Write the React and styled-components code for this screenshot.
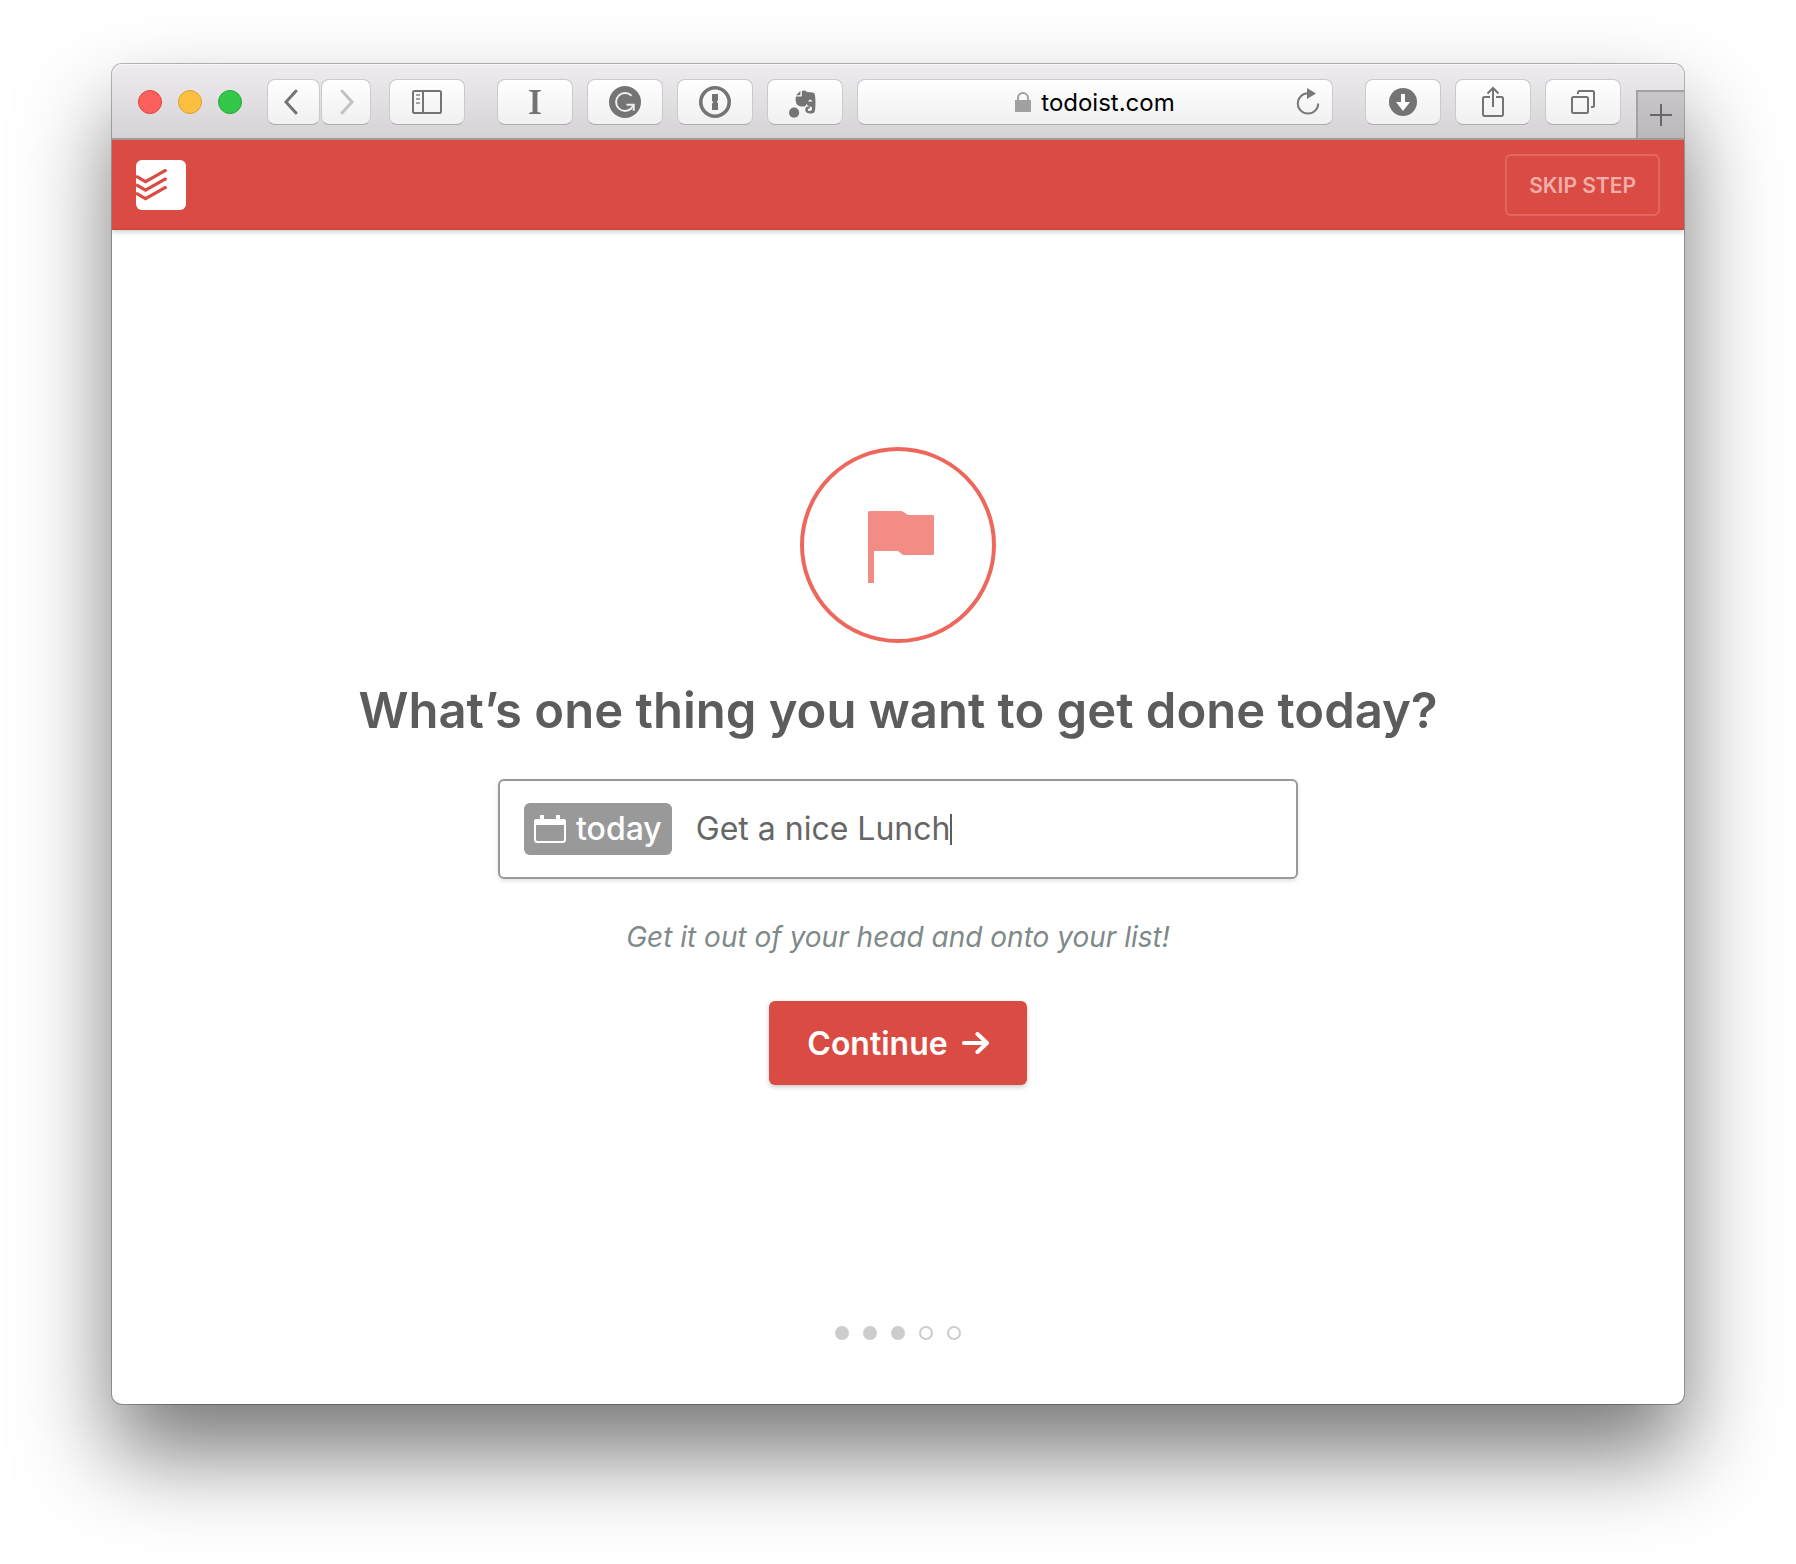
import React from "react";
import styled, { createGlobalStyle } from "styled-components";

const GlobalStyle = createGlobalStyle`
  * { box-sizing: border-box; }
  body {
    margin: 0;
    background: #fff;
    font-family: Inter, "Liberation Sans", sans-serif;
  }
  button, input { font-family: inherit; }
`;

const Desktop = styled.div`
  display: flex;
  min-height: 100vh;
  padding: 64px 112px 160px;
`;

const BrowserWindow = styled.div`
  display: flex;
  flex: 1;
  flex-direction: column;
  overflow: hidden;
  min-width: 0;
  border-radius: 10px;
  background: #fff;
  box-shadow: 0 0 0 1px rgba(0, 0, 0, 0.27), 0 50px 90px rgba(0, 0, 0, 0.53);
`;

const Toolbar = styled.div`
  display: flex;
  align-items: flex-start;
  height: 76px;
  padding: 15px 0 0 26px;
  border-bottom: 2px solid #a09ea2;
  background: linear-gradient(#eeecef, #d5d3d6);
  box-shadow: inset 0 1px 0 #f7f6f8;
`;

const Group = styled.div`
  display: flex;
  gap: ${(p) => p.$gap}px;
  margin-right: ${(p) => p.$after}px;
`;

const Lights = styled(Group)`
  align-items: center;
  height: 46px;
`;

const Light = styled.button`
  width: 24px;
  height: 24px;
  padding: 0;
  border: 1px solid ${(p) => p.$edge};
  border-radius: 50%;
  background: ${(p) => p.$fill};
`;

const ToolButton = styled.button`
  display: flex;
  align-items: center;
  justify-content: center;
  width: ${(p) => p.$width || 76}px;
  height: 46px;
  padding: 0;
  border: 1px solid #cbc9cc;
  border-bottom-color: #aeacaf;
  border-radius: 8px;
  background: linear-gradient(#fff, #f0f0f0);
  color: ${(p) => p.$color || "#747474"};
`;

const Address = styled.div`
  display: flex;
  flex: 1;
  align-items: center;
  min-width: 0;
  height: 46px;
  margin-right: 32px;
  padding: 0 12px 0 36px;
  border: 1px solid #cbc9cc;
  border-bottom-color: #aeacaf;
  border-radius: 8px;
  background: linear-gradient(#fff, #f0f0f0);
`;

const Location = styled.div`
  display: flex;
  flex: 1;
  align-items: center;
  justify-content: center;
  gap: 10px;
`;

const LocationInput = styled.input`
  field-sizing: content;
  padding: 2px 0 0;
  border: 0;
  outline: 0;
  background: none;
  color: #000;
  font-size: 24px;
  line-height: 32px;
`;

const PlainButton = styled.button`
  display: flex;
  padding: 0;
  border: 0;
  background: none;
  color: #7a7a7a;
`;

const NewTab = styled.button`
  display: flex;
  align-self: flex-end;
  align-items: center;
  justify-content: center;
  width: 48px;
  height: 48px;
  padding: 0;
  border: solid #a3a1a5;
  border-width: 2px 0 0 2px;
  background: linear-gradient(#c8c6c9, #bab8bb);
  color: #69676b;
`;

const Header = styled.header`
  display: flex;
  align-items: center;
  justify-content: space-between;
  height: 90px;
  padding: 0 24px;
  background: #da4c43;
  box-shadow: inset 0 -2px 0 #cc483d, 0 2px 5px rgba(0, 0, 0, 0.2);
`;

const Logo = styled.a`
  display: flex;
  border-radius: 6px;
`;

const SkipButton = styled.button`
  height: 62px;
  padding: 0 22px;
  border: 2px solid #e1675f;
  border-radius: 6px;
  background: transparent;
  color: #f0aeaa;
  font-size: 21px;
  font-weight: 600;
`;

const Main = styled.main`
  display: flex;
  flex: 1;
  flex-direction: column;
  align-items: center;
  justify-content: center;
`;

const Badge = styled.div`
  display: flex;
  align-items: center;
  justify-content: center;
  width: 196px;
  height: 196px;
  padding: 4px 0 0 6px;
  border: 4px solid #ee675c;
  border-radius: 50%;
`;

const Title = styled.h1`
  margin: 36px 0;
  color: #5c5c5c;
  font-size: 49px;
  font-weight: 600;
  line-height: 64px;
  text-align: center;
`;

const TaskField = styled.label`
  display: flex;
  align-items: center;
  gap: 24px;
  width: 100%;
  max-width: 800px;
  height: 100px;
  padding: 0 24px;
  border: 2px solid #999;
  border-radius: 6px;
  box-shadow: 0 2px 4px rgba(0, 0, 0, 0.12);
`;

const DateTag = styled.span`
  display: flex;
  align-items: center;
  gap: 10px;
  height: 52px;
  padding: 0 10px;
  border-radius: 6px;
  background: #999;
  color: #fff;
  font-size: 32px;
  font-weight: 500;
  line-height: 40px;
`;

const Entry = styled.span`
  display: flex;
  align-items: center;
`;

const TaskInput = styled.input`
  field-sizing: content;
  padding: 0;
  border: 0;
  outline: 0;
  background: none;
  color: #666;
  caret-color: transparent;
  font-size: 32px;
  font-weight: 400;
  line-height: 40px;
`;

const Caret = styled.span`
  width: 2px;
  height: 31px;
  background: #5c5c5c;
`;

const Hint = styled.p`
  margin: 38px 0 44px;
  color: #808989;
  font-size: 28px;
  font-style: italic;
  font-weight: 400;
  line-height: 40px;
`;

const ContinueButton = styled.button`
  display: flex;
  align-items: center;
  gap: 14px;
  height: 84px;
  padding: 0 38px;
  border: 0;
  border-radius: 6px;
  background: #da4c43;
  box-shadow: 0 2px 5px rgba(0, 0, 0, 0.22);
  color: #fff;
  font-size: 32px;
  font-weight: 600;
`;

const Steps = styled.footer`
  display: flex;
  justify-content: center;
  gap: 14px;
  padding: 24px 0 64px;
`;

const Step = styled.span`
  width: 14px;
  height: 14px;
  border: 2px solid #ccc;
  border-radius: 50%;
  background: ${(p) => (p.$done ? "#ccc" : "transparent")};
`;

const Svg = ({ w, h, children, ...rest }) => (
  <svg width={w} height={h} viewBox={`0 0 ${w} ${h}`} fill="none" aria-hidden="true" {...rest}>
    {children}
  </svg>
);

const Chevron = ({ d }) => (
  <Svg w={20} h={26} stroke="currentColor" strokeWidth="3" strokeLinecap="round" strokeLinejoin="miter">
    <path d={d} />
  </Svg>
);

const SidebarIcon = () => (
  <Svg w={30} h={24} stroke="currentColor" strokeWidth="2">
    <rect x="1" y="1" width="28" height="22" rx="1.5" />
    <path d="M11 1v22" />
    <path d="M4 5h4M4 9h4M4 13h4" stroke="#a3a3a3" />
  </Svg>
);

const InstapaperIcon = () => (
  <Svg w={12} h={24} fill="currentColor">
    <rect x="4" y="0" width="4" height="24" />
    <path d="M0 0h12v1l-3 1h-6L0 1zM0 24h12v-1l-3-1h-6L0 23z" />
    <path d="M3 1h6v22H3z" opacity=".45" />
  </Svg>
);

const GrammarlyIcon = () => (
  <Svg w={32} h={32}>
    <circle cx="16" cy="16" r="16" fill="currentColor" />
    <path d="M22.500 9.700A9 9 0 1 0 22.500 22.300" stroke="#eee" strokeWidth="2" />
    <path d="M17.500 18.700h7.200v6" stroke="#eee" strokeWidth="2" />
    <path d="M24.800 18.800l-3 4.200" stroke="#eee" strokeWidth="1.600" />
  </Svg>
);

const OnePasswordIcon = () => (
  <Svg w={32} h={32}>
    <circle cx="16" cy="16" r="14.200" stroke="currentColor" strokeWidth="3.600" />
    <path d="M13 8h6v6.200l-1.200 1.500 1.200 1.500V24h-6v-6.200l1.200-1.500-1.200-1.500z" fill="currentColor" />
  </Svg>
);

const EvernoteIcon = () => (
  <Svg w={32} h={32} fill="currentColor">
    <g transform="translate(0 4)">
      <circle cx="5.100" cy="22.700" r="5.100" />
      <path d="M7 5.200 11.400 1v3.200q0 1-1 1z" />
      <path d="M7 6.600h4.600q1.200 0 1.200-1.200V1.200C14 0 17 0 18 2l5.500.6c1.600.2 2.200 1 2.500 2.800.6 4 .7 9 .2 13.500-.4 3.300-1.500 4.600-4.500 4.600-3.800 0-5.500-1.200-5.500-3.900 0-2.400 1.400-3.500 4.600-3.400v2.200c-1.500 0-2 .3-2 1.100 0 1.100.6 1.500 2 1.500 1.700 0 2.200-.7 2.200-2.400 0-1.400-.4-2-1.700-2.200-2.200-.3-3.200-1-3.600-2.600-.5 1.900-1.400 2.800-3.200 2.800-3 0-6-.6-7.200-3.300C6.600 11.500 6.300 9 7 6.600z" />
      <path d="M19.800 11.400c.3-1.500 1.900-1.900 3-.2-1-.3-2-.2-3 .2z" fill="#fff" stroke="#fff" strokeWidth=".8" />
    </g>
  </Svg>
);

const LockIcon = () => (
  <Svg w={16} h={20}>
    <rect y="8" width="16" height="12" fill="#a0a0a0" />
    <path d="M3 9V6a5 5 0 0 1 10 0v3" stroke="#a0a0a0" strokeWidth="2" />
  </Svg>
);

const ReloadIcon = () => (
  <Svg w={24} h={28}>
    <path d="M12 5.200A10.200 10.200 0 1 0 22.200 15.400" stroke="currentColor" strokeWidth="2" />
    <path d="M11 0l9 5.500-9 5.500z" fill="currentColor" />
  </Svg>
);

const DownloadIcon = () => (
  <Svg w={28} h={28}>
    <circle cx="14" cy="14" r="14" fill="currentColor" />
    <path d="M12 6h4v8h5l-7 9-7-9h5z" fill="#fff" />
  </Svg>
);

const ShareIcon = () => (
  <Svg w={22} h={34} stroke="currentColor" strokeWidth="2">
    <path d="M8 12H2.500A1.500 1.500 0 0 0 1 13.500v16A1.500 1.500 0 0 0 2.500 31h17a1.500 1.500 0 0 0 1.500-1.500v-16a1.500 1.500 0 0 0-1.500-1.500H14" />
    <path d="M11 22V3M5.500 8.500 11 3l5.500 5.500" />
  </Svg>
);

const TabsIcon = () => (
  <Svg w={24} h={24} stroke="currentColor" strokeWidth="2">
    <rect x="1" y="7" width="16" height="16" rx="1.500" />
    <path d="M7 4V2.500A1.500 1.500 0 0 1 8.500 1h13A1.500 1.500 0 0 1 23 2.500v13a1.500 1.500 0 0 1-1.500 1.500H20" />
  </Svg>
);

const PlusIcon = () => (
  <Svg w={22} h={22} stroke="currentColor" strokeWidth="2">
    <path d="M11 0v22M0 11h22" />
  </Svg>
);

const TodoistLogo = () => (
  <Svg w={50} h={50}>
    <rect width="50" height="50" rx="6" fill="#fff" />
    <g stroke="#da4c43" strokeWidth="3.200" strokeLinejoin="miter">
      <path d="M0 16.200 9.500 21.600 29.500 10.300" />
      <path d="M0 24.700 9.500 30.100 29.500 18.800" />
      <path d="M0 33.200 9.500 38.600 29.500 27.300" />
    </g>
    <g fill="#da4c43">
      <circle cx="29.300" cy="10.600" r="1.700" />
      <circle cx="29.300" cy="19.100" r="1.700" />
      <circle cx="29.300" cy="27.600" r="1.700" />
    </g>
  </Svg>
);

const FlagIcon = () => (
  <Svg w={66} h={72}>
    <path
      d="M1.500 0H33q1 0 2 .7L40 4h24.500Q66 4 66 5.500v37Q66 44 64.500 44H36q-1.200 0-2-.8L30 40H6v32H0V1.500Q0 0 1.500 0z"
      fill="#f38c85"
    />
  </Svg>
);

const CalendarIcon = () => (
  <Svg w={32} h={28}>
    <rect x="1" y="5" width="30" height="22" rx="2.500" stroke="#fff" strokeWidth="2" />
    <path d="M0 10V6.500Q0 4 2.500 4H6V0h4v4h12V0h4v4h3.500Q32 4 32 6.500V10z" fill="#fff" />
  </Svg>
);

const ArrowIcon = () => (
  <Svg w={27} h={22} stroke="#fff" strokeWidth="4" strokeLinecap="round" strokeLinejoin="round">
    <path d="M2 11h22M15.500 2 25 11l-9.500 9" />
  </Svg>
);

const extensions = [
  ["Instapaper", InstapaperIcon],
  ["Grammarly", GrammarlyIcon],
  ["1Password", OnePasswordIcon],
  ["Evernote", EvernoteIcon],
];

const actions = [
  ["Downloads", DownloadIcon],
  ["Share", ShareIcon],
  ["Show all tabs", TabsIcon],
];

const steps = [true, true, true, false, false];

export default function App() {
  return (
    <>
      <GlobalStyle />
      <Desktop>
        <BrowserWindow>
          <Toolbar>
            <Lights $gap={16} $after={25}>
              <Light aria-label="Close" $fill="#fc605c" $edge="#e0443f" />
              <Light aria-label="Minimize" $fill="#fdbf40" $edge="#dea034" />
              <Light aria-label="Zoom" $fill="#34c84a" $edge="#24a735" />
            </Lights>
            <Group $gap={1} $after={18}>
              <ToolButton aria-label="Back" $width={53}>
                <Chevron d="M12 2 2 13l10 11" />
              </ToolButton>
              <ToolButton aria-label="Forward" $width={50} $color="#c3c3c3">
                <Chevron d="M6 2l10 11L6 24" />
              </ToolButton>
            </Group>
            <Group $gap={14} $after={32}>
              <ToolButton aria-label="Show sidebar">
                <SidebarIcon />
              </ToolButton>
            </Group>
            <Group $gap={14} $after={14}>
              {extensions.map(([name, Icon]) => (
                <ToolButton key={name} aria-label={name}>
                  <Icon />
                </ToolButton>
              ))}
            </Group>
            <Address>
              <Location>
                <LockIcon />
                <LocationInput aria-label="Address" defaultValue="todoist.com" />
              </Location>
              <PlainButton aria-label="Reload">
                <ReloadIcon />
              </PlainButton>
            </Address>
            <Group $gap={14} $after={15}>
              {actions.map(([name, Icon]) => (
                <ToolButton key={name} aria-label={name}>
                  <Icon />
                </ToolButton>
              ))}
            </Group>
            <NewTab aria-label="New tab">
              <PlusIcon />
            </NewTab>
          </Toolbar>
          <Header>
            <Logo href="#" aria-label="Todoist">
              <TodoistLogo />
            </Logo>
            <SkipButton>SKIP STEP</SkipButton>
          </Header>
          <Main>
            <Badge>
              <FlagIcon />
            </Badge>
            <Title>What’s one thing you want to get done today?</Title>
            <TaskField>
              <DateTag>
                <CalendarIcon />
                today
              </DateTag>
              <Entry>
                <TaskInput aria-label="Task for today" defaultValue="Get a nice Lunch" />
                <Caret />
              </Entry>
            </TaskField>
            <Hint>Get it out of your head and onto your list!</Hint>
            <ContinueButton>
              Continue
              <ArrowIcon />
            </ContinueButton>
          </Main>
          <Steps aria-label="Step 3 of 5">
            {steps.map((done, i) => (
              <Step key={i} $done={done} />
            ))}
          </Steps>
        </BrowserWindow>
      </Desktop>
    </>
  );
}
